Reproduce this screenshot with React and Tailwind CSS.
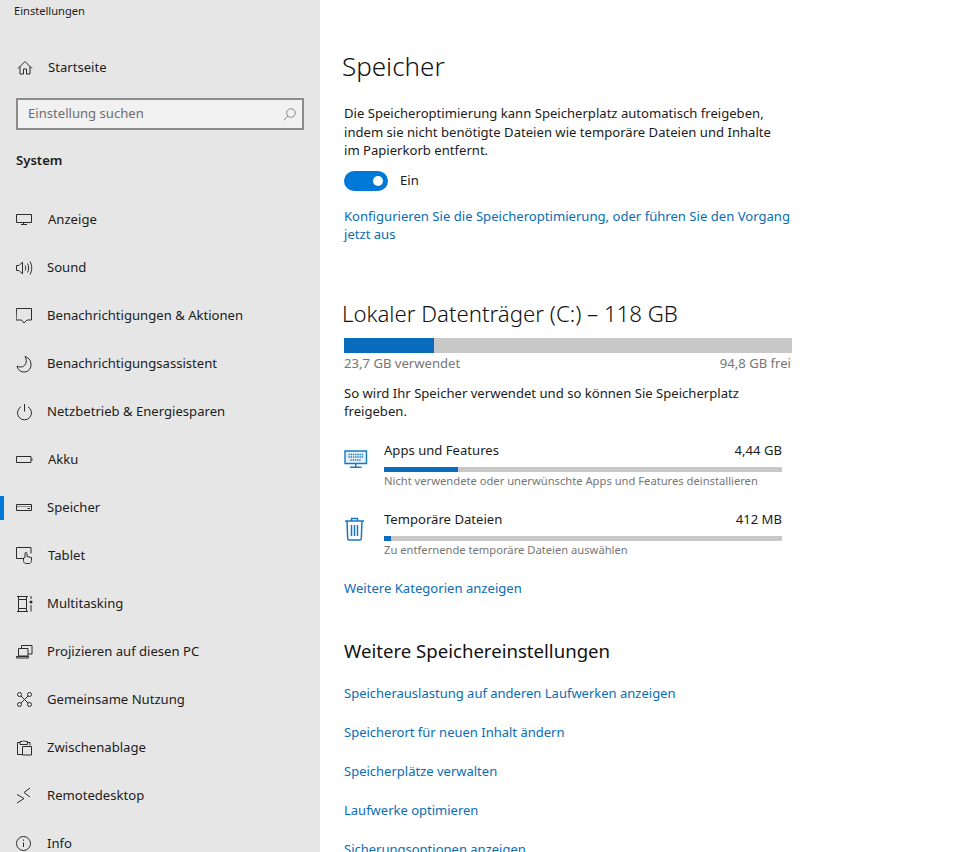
import React from "react";

function Icon({ children, className = "" }) {
  return (
    <svg
      width="18"
      height="18"
      viewBox="0 0 18 18"
      fill="none"
      stroke="#2b2b2b"
      strokeWidth="1"
      className={"shrink-0 " + className}
    >
      {children}
    </svg>
  );
}

const navItems = [
  {
    label: "Anzeige",
    shift: true,
    icon: <path d="M.5 3.500h15v8h-15zM7.500 11.500v2M5 13.500h6" />,
  },
  {
    label: "Sound",
    icon: (
      <>
        <path d="M.5 6.500h2.500l3.500-3.500v12l-3.500-3.500h-2.500z" />
        <path d="M9 6.500c1 1.500 1 3.500 0 5M11.500 4.500c1.500 2.700 1.500 6.300 0 9M14 2.500c2.300 4 2.300 9 0 13" />
      </>
    ),
  },
  {
    label: "Benachrichtigungen & Aktionen",
    icon: <path d="M.5 1.500h15v11.500h-4.500l-3 3-2.500-3h-5.500z" />,
  },
  {
    label: "Benachrichtigungsassistent",
    icon: <path d="M9 1.500c3 .8 6 3.500 6 7.500a6.500 6.500 0 0 1-14 2c1 .7 2 1 3.500 1 5 0 7.500-5.500 4.500-10.500z" />,
  },
  {
    label: "Netzbetrieb & Energiesparen",
    icon: (
      <>
        <path d="M8.500 1v7.500" />
        <path d="M5 3.800a7 7 0 1 0 7 0" />
      </>
    ),
  },
  {
    label: "Akku",
    shift: true,
    icon: (
      <>
        <path d="M.5 5.500h14.500v6h-14.500z" />
        <path d="M15.500 7.500h1v2h-1z" fill="#2b2b2b" stroke="none" />
      </>
    ),
  },
  {
    label: "Speicher",
    active: true,
    icon: (
      <>
        <path d="M.5 5.500h15v6h-15z" />
        <path d="M.5 7.500h15" strokeOpacity="0.5" />
        <path d="M11.500 9.500h2.500" />
      </>
    ),
  },
  {
    label: "Tablet",
    shift: true,
    icon: (
      <>
        <path d="M7 11.500h-6.500v-11h14.500v6" />
        <path d="M9.500 16.500c-1.500-.5-2-1.800-2-3v-2.500l1.500-.5v-4a1 1 0 0 1 2 0v3l4.500 1v3c0 1.500-.8 2.500-2 3z" />
      </>
    ),
  },
  {
    label: "Multitasking",
    icon: (
      <>
        <path d="M.5 1.500h11M.5 16.500h11M2 4.500h8v9h-8zM2 1.500v3M10 1.500v3M2 13.500v3M10 13.500v3" transform="translate(.5 0)" />
        <path d="M15 1v3M15 10v6.500" />
        <circle cx="15" cy="7" r="1.500" fill="#2b2b2b" stroke="none" />
      </>
    ),
  },
  {
    label: "Projizieren auf diesen PC",
    icon: (
      <>
        <path d="M5.500 5.500v-3h10.500v8.500h-4" />
        <path d="M2.500 5.500h9.500v7.500h-9.500zM.5 13.500h12v1.500h-12z" />
      </>
    ),
  },
  {
    label: "Gemeinsame Nutzung",
    icon: (
      <>
        <circle cx="3.500" cy="3.500" r="2" />
        <circle cx="13.500" cy="3.500" r="2" />
        <circle cx="3.500" cy="13.500" r="2" />
        <circle cx="13.500" cy="13.500" r="2" />
        <path d="M5 5l7 7M12 5l-7 7" />
      </>
    ),
  },
  {
    label: "Zwischenablage",
    icon: (
      <>
        <path d="M4 3.500h-2.500v12h4.500M11.500 3.500h2.500v3" />
        <path d="M4 2.500h2.500a1.500 1.500 0 0 1 2.500 0h2.500v3h-7.500z" />
        <path d="M6.500 7.500h9v8.500h-9z" />
      </>
    ),
  },
  {
    label: "Remotedesktop",
    icon: <path d="M1 7.500l7 4-7 4.500M14 1l-6 4.500 6 4.500" />,
  },
  {
    label: "Info",
    icon: (
      <>
        <circle cx="7.500" cy="8.500" r="7" />
        <path d="M7.500 7.500v4.500M7.500 4.500v1.300" />
      </>
    ),
  },
];

function Link({ children, className = "" }) {
  return <a className={"block text-[#0a6db5] " + className}>{children}</a>;
}

function Usage({ icon, title, size, percent, hint }) {
  return (
    <div className="flex">
      <div className="w-10 shrink-0">{icon}</div>
      <div className="w-[398px]">
        <div className="flex justify-between h-[21px] leading-[21px] text-[#1c1c1c]">
          <span>{title}</span>
          <span>{size}</span>
        </div>
        <div className="h-[5px] mt-[6px] bg-[#c8c8c8]">
          <div className="h-full bg-[#0a6cbd]" style={{ width: percent + "%" }}></div>
        </div>
        <div className="text-[11.200px] leading-[16px] mt-[1px] text-[#767676]">{hint}</div>
      </div>
    </div>
  );
}

export default function App() {
  return (
    <div className="flex h-[852px] w-[958px] overflow-hidden bg-white font-['Noto_Sans',sans-serif] text-[13.100px] text-[#1c1c1c]">
      <aside className="w-[320px] shrink-0 bg-[#e6e6e6]">
        <div className="pl-[14px] pt-[3px] h-[52px] text-[11.100px] leading-[16px]">Einstellungen</div>
        <div className="flex items-center h-[32px] pl-[17px]">
          <Icon>
            <path d="M1 9.500l7-7 7 7M3 7.500v7.500h3.500v-5h3v5h3.500v-7.500" />
          </Icon>
          <span className="ml-[13px]">Startseite</span>
        </div>
        <div className="flex items-center justify-between mx-4 mt-[14px] h-8 border-2 border-[#8c8c8c] bg-[#f1f1f1] pl-[10px] pr-[6px] text-[#6f6f6f]">
          <span>Einstellung suchen</span>
          <svg width="13" height="13" viewBox="0 0 13 13" fill="none" stroke="#8a8a8a">
            <circle cx="8" cy="5" r="4.300" />
            <path d="M5 8L.8 12.200" />
          </svg>
        </div>
        <div className="pl-4 mt-[20px] h-5 leading-5 font-semibold">System</div>
        <nav className="mt-[26px]">
          {navItems.map((item) => (
            <div key={item.label} className="relative flex items-center h-12 pl-[16px]">
              {item.active && <div className="absolute left-0 top-[12px] h-6 w-1 bg-[#0078d7]"></div>}
              <Icon>{item.icon}</Icon>
              <span className={item.shift ? "ml-[14px] whitespace-nowrap" : "ml-[13px] whitespace-nowrap"}>{item.label}</span>
            </div>
          ))}
        </nav>
      </aside>

      <main className="flex-1 pl-6">
        <h1 className="text-[26px] leading-9 mt-[48px] -ml-[2px] font-light text-[#111]">Speicher</h1>
        <p className="w-[450px] mt-[20px] leading-[18.500px]">
          Die Speicheroptimierung kann Speicherplatz automatisch freigeben,
          <br />
          indem sie nicht benötigte Dateien wie temporäre Dateien und Inhalte
          <br />
          im Papierkorb entfernt.
        </p>
        <div className="flex items-center mt-[11px] h-5">
          <div className="flex items-center justify-end w-11 h-5 rounded-full bg-[#0078d7] pr-[5px]">
            <div className="w-[10px] h-[10px] rounded-full bg-white"></div>
          </div>
          <span className="ml-3">Ein</span>
        </div>
        <Link className="w-[450px] mt-[16px] leading-[18.500px]">
          Konfigurieren Sie die Speicheroptimierung, oder führen Sie den Vorgang jetzt aus
        </Link>
        <h2 className="text-[22.200px] leading-8 mt-[54px] -ml-[2px] font-light text-[#111]">
          Lokaler Datenträger (C:) – 118 GB
        </h2>
        <div className="w-[448px] h-[15px] mt-[8px] bg-[#c8c8c8]">
          <div className="h-full w-[90px] bg-[#0a6cbd]"></div>
        </div>
        <div className="flex justify-between w-[447px] h-5 mt-[0px] leading-5 text-[#767676]">
          <span>23,7 GB verwendet</span>
          <span>94,8 GB frei</span>
        </div>
        <p className="w-[440px] mt-[11px] leading-[18px]">
          So wird Ihr Speicher verwendet und so können Sie Speicherplatz freigeben.
        </p>
        <div className="mt-[20px] flex flex-col gap-[20px]">
          <Usage
            title="Apps und Features"
            size="4,44 GB"
            percent={18.600}
            hint="Nicht verwendete oder unerwünschte Apps und Features deinstallieren"
            icon={
              <svg width="24" height="19" viewBox="0 0 24 19" fill="none" stroke="#1a78c2" strokeWidth="1.400" className="mt-[10px]">
                <path d="M1 1h21.500v12.500h-21.500z" fill="#e4f0f9" />
                <path d="M11.750 13.500v3.500M6 17.300h11.500" />
                <path d="M4.500 4.500h14.500M4.500 7h14.500M6.500 10h10.500" strokeWidth="1.300" strokeDasharray="1.300 .9" />
              </svg>
            }
          />
          <Usage
            title="Temporäre Dateien"
            size="412 MB"
            percent={1.800}
            hint="Zu entfernende temporäre Dateien auswählen"
            icon={
              <svg width="22" height="26" viewBox="0 0 22 26" fill="none" stroke="#1a78c2" strokeWidth="1.500" className="mt-[7px]">
                <path d="M1 5h19M7.500 5v-2.500h6v2.500M3 5l.7 17.500a1.500 1.500 0 0 0 1.500 1.500h10.600a1.500 1.500 0 0 0 1.500-1.500l.7-17.500M7.500 9v11M10.500 9v11M13.500 9v11" />
              </svg>
            }
          />
        </div>
        <Link className="mt-[21px]">Weitere Kategorien anzeigen</Link>
        <h3 className="text-[18.600px] leading-7 mt-[39px] text-[#111]">Weitere Speichereinstellungen</h3>
        <div className="mt-[19px] flex flex-col gap-[21px] leading-[18px] text-[13px]">
          <Link>Speicherauslastung auf anderen Laufwerken anzeigen</Link>
          <Link>Speicherort für neuen Inhalt ändern</Link>
          <Link>Speicherplätze verwalten</Link>
          <Link>Laufwerke optimieren</Link>
          <Link>Sicherungsoptionen anzeigen</Link>
        </div>
      </main>
    </div>
  );
}
